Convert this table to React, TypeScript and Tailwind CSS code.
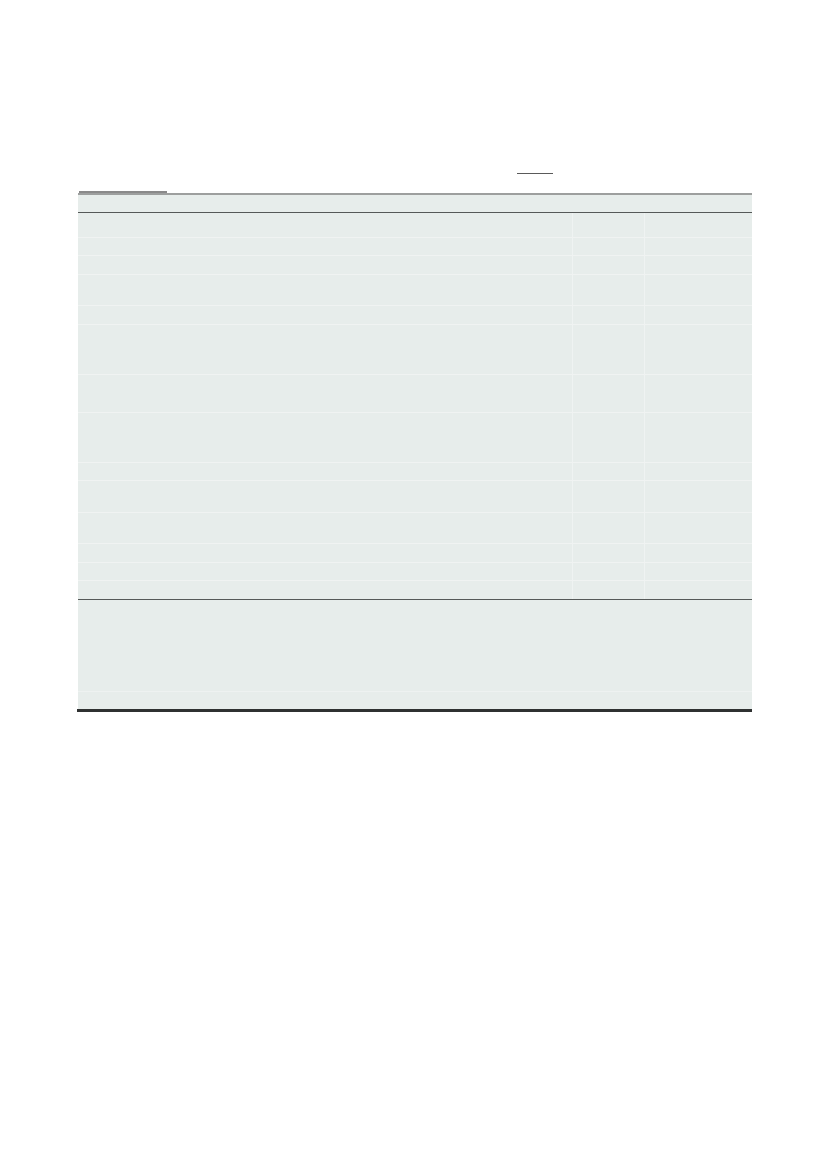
const columns = ["w-[302px]", "w-[63px]", "w-[62px]", "w-[67px]", "w-[72px]", "w-[56px]", "w-[52px]"];

// heights include the 1px rule below each row
const rows = [25, 18, 19, 31, 19, 50, 38, 50, 18, 32, 31, 19, 18, 18];

function BodyRow({ height, last }: { height: number; last: boolean }) {
  return (
    <div className={`flex ${last ? "" : "border-b border-[#f0f3f2]"}`} style={{ height }}>
      {columns.map((w, i) => (
        <div
          key={i}
          className={`${w} h-full ${i === 4 || i === 5 ? "border-l border-[#eff3f2]" : ""}`}
        />
      ))}
    </div>
  );
}

export default function App() {
  return (
    <div className="min-h-[1169px] w-[827px] bg-white pt-[173px] font-['Liberation_Sans',sans-serif]">
      <div className="ml-[517px] h-px w-[36px] bg-[#5a5a5a]" />
      <div className="ml-[79px] mt-[17px] h-[2px] w-[88px] bg-[#8a8a8a]" />

      <section className="ml-[78px] w-[674px]">
        <div className="h-[2px] bg-[#9d9f9e]" />
        <div className="bg-[#e7edeb]">
          <div className="flex h-[18px] border-b border-[#555958]">
            {columns.map((w, i) => (
              <div key={i} className={`${w} h-full`} />
            ))}
          </div>

          {rows.map((h, i) => (
            <BodyRow key={i} height={h} last={i === rows.length - 1} />
          ))}

          <div className="border-t border-[#555958]">
            <div className="h-[92px] border-b border-[#eef2f1]" />
            <div className="h-[17px]" />
          </div>
        </div>
      </section>
      <div className="ml-[77px] h-[3px] w-[675px] bg-[#2f3131]" />
    </div>
  );
}
